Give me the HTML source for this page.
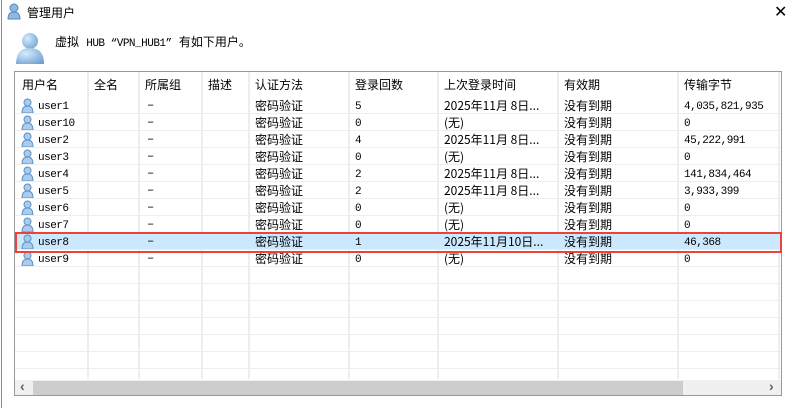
<!DOCTYPE html>
<html><head><meta charset="utf-8"><style>
body{margin:0;width:795px;height:408px;background:#fff;position:relative;overflow:hidden;font-family:"Liberation Mono","Noto Sans CJK SC",monospace;font-size:12px;color:#000}
.abs{position:absolute}
#win{left:1px;top:0;width:1px;height:408px;background:#888}
#list{left:14px;top:71px;width:768px;height:325px;border:1px solid #999;box-sizing:border-box;overflow:hidden}
.hdr{position:absolute;top:1px;height:25px;line-height:25px;font-family:"Liberation Sans","Noto Sans CJK SC",sans-serif;font-size:12px}
.vl{position:absolute;top:0;width:2px;background:#e9eef5}
.hl{position:absolute;left:0;width:766px;height:1px;background:#eeeeee}
.cell{position:absolute;height:17px;line-height:17px;white-space:nowrap}
.m{font-size:11px;letter-spacing:-0.5px}
.cj{font-family:"Noto Sans CJK SC",sans-serif}
</style></head><body>
<div id="win" class="abs"></div>
<svg class="abs" style="left:7px;top:3px" width="14" height="17" viewBox="0 0 14 17"><circle cx="7" cy="5" r="4" fill="#8fb8e0" stroke="#5a86b8"/><path d="M1 16 Q1 9 7 9 Q13 9 13 16 Z" fill="#8fb8e0" stroke="#5a86b8"/></svg>
<div class="abs cj" style="left:27px;top:4px;font-size:12px">管理用户</div>
<div class="abs" style="left:774px;top:2px;font-size:16px;font-family:'Liberation Sans'">✕</div>
<svg class="abs" style="left:15px;top:31px" width="30" height="34" viewBox="0 0 30 34"><defs><radialGradient id="g" cx=".35" cy=".35" r=".8"><stop offset="0" stop-color="#d6ecff"/><stop offset="1" stop-color="#6f9fd0"/></radialGradient></defs><circle cx="15" cy="10" r="8" fill="url(#g)"/><path d="M1 33 Q1 17 15 17 Q29 17 29 33 Z" fill="url(#g)"/></svg>
<div class="abs" style="left:55px;top:33px;font-size:12px"><span class="cj">虚拟</span> <span style="font-size:11px;letter-spacing:-0.5px">HUB “VPN_HUB1”</span> <span class="cj">有如下用户。</span></div>
<div id="list" class="abs">
<div class="vl" style="left:72px;height:307px"></div><div class="vl" style="left:123px;height:307px"></div><div class="vl" style="left:186px;height:307px"></div><div class="vl" style="left:233px;height:307px"></div><div class="vl" style="left:333px;height:307px"></div><div class="vl" style="left:422px;height:307px"></div><div class="vl" style="left:542px;height:307px"></div><div class="vl" style="left:662px;height:307px"></div><div class="vl" style="left:763px;height:307px"></div>
<div class="hdr" style="left:7px">用户名</div><div class="hdr" style="left:79px">全名</div><div class="hdr" style="left:130px">所属组</div><div class="hdr" style="left:193px">描述</div><div class="hdr" style="left:240px">认证方法</div><div class="hdr" style="left:340px">登录回数</div><div class="hdr" style="left:429px">上次登录时间</div><div class="hdr" style="left:549px">有效期</div><div class="hdr" style="left:669px">传输字节</div>
<div id="rows"></div>
<div class="abs" style="left:0;top:308px;width:766px;height:16px;background:#f0f0f0"></div>
<div class="abs" style="left:18px;top:309px;width:650px;height:15px;background:#cdcdcd"></div>
<div class="abs" style="left:5px;top:306px;color:#606060;font-size:14px;font-weight:bold;font-family:'Liberation Sans'">‹</div>
<div class="abs" style="left:754px;top:306px;color:#606060;font-size:14px;font-weight:bold;font-family:'Liberation Sans'">›</div>
</div>
<script>
var d=[["user1","5","2025年11月 8日...","4,035,821,935"],["user10","0","(无)","0"],["user2","4","2025年11月 8日...","45,222,991"],["user3","0","(无)","0"],["user4","2","2025年11月 8日...","141,834,464"],["user5","2","2025年11月 8日...","3,933,399"],["user6","0","(无)","0"],["user7","0","(无)","0"],["user8","1","2025年11月10日...","46,368"],["user9","0","(无)","0"]];
var h="";
for(var i=0;i<17;i++){var t=25+i*17;
 if(i<10){var r=d[i];
  if(i==8)h+='<div class="abs" style="left:0;top:'+t+'px;width:766px;height:17px;background:#cce8ff"></div>';
  h+='<svg class="abs" style="left:6px;top:'+(t+1)+'px" width="13" height="16" viewBox="0 0 13 16"><circle cx="6.5" cy="4.5" r="3.5" fill="#a9cdee" stroke="#5f8fc0"/><path d="M1 15 Q1 8 6.5 8 Q12 8 12 15 Z" fill="#a9cdee" stroke="#5f8fc0"/></svg>';
  h+='<div class="cell m" style="left:23px;top:'+(t+2)+'px">'+r[0]+'</div><div class="cell" style="left:132px;top:'+t+'px">–</div><div class="cell cj" style="left:240px;top:'+t+'px">密码验证</div><div class="cell m" style="left:340px;top:'+(t+2)+'px">'+r[1]+'</div><div class="cell cj" style="left:429px;top:'+t+'px">'+r[2]+'</div><div class="cell cj" style="left:549px;top:'+t+'px">没有到期</div><div class="cell m" style="left:669px;top:'+(t+2)+'px">'+r[3]+'</div>';}
 h+='<div class="hl" style="top:'+(t+16)+'px"></div>';}
document.getElementById('rows').innerHTML=h;
</script>
<div class="abs" style="left:15px;top:232px;width:763px;height:17px;border:2px solid #e8443a"></div>
</body></html>
